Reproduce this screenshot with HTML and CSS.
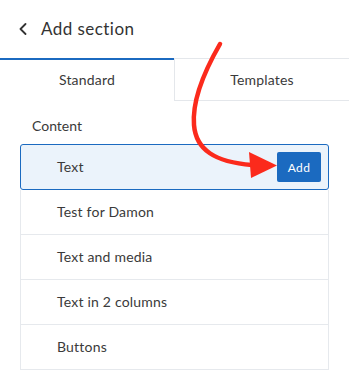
FILE: index.html
```html
<!DOCTYPE html>
<html lang="en">
<head>
    <meta charset="UTF-8">
    <meta name="viewport" content="width=device-width, initial-scale=1.0">
    <title>Add section</title>
    <link rel="stylesheet" href="styles.css">
</head>
<body>
    <div class="panel">
        <div class="panel-header">
            <svg class="back-icon" width="10" height="12" viewBox="0 0 10 12">
                <path d="M7.5 1 L2.5 6 L7.5 11" fill="none" stroke="#333" stroke-width="1.8" stroke-linecap="round" stroke-linejoin="round"/>
            </svg>
            <span class="panel-title">Add section</span>
        </div>
        <div class="tabs">
            <div class="tab tab-active">Standard</div>
            <div class="tab">Templates</div>
        </div>
        <div class="group-label">Content</div>
        <ul class="section-list">
            <li class="section-item selected">
                <span>Text</span>
                <button type="button" class="add-btn">Add</button>
            </li>
            <li class="section-item"><span>Test for Damon</span></li>
            <li class="section-item"><span>Text and media</span></li>
            <li class="section-item"><span>Text in 2 columns</span></li>
            <li class="section-item"><span>Buttons</span></li>
        </ul>
        <!-- annotation arrow drawn over the panel -->
        <svg class="arrow" width="349" height="370" viewBox="0 0 349 370">
            <path d="M220 44 C 205 70, 192 100, 194 125 C 196 150, 215 162, 252 165" fill="none" stroke="#fb2a1c" stroke-width="4.5" stroke-linecap="round"/>
            <polygon points="249,152 277,165.5 251,178" fill="#fb2a1c"/>
        </svg>
    </div>
</body>
</html>
```

FILE: styles.css
```css
body {
    margin: 0;
    background: #fff;
    font-family: 'Lato', 'Open Sans', Arial, sans-serif;
    color: #333;
}
.panel {
    position: relative;
    width: 349px;
    height: 370px;
    overflow: hidden;
}
.panel-header {
    display: flex;
    align-items: center;
    height: 58px;
    padding-left: 18px;
    padding-bottom: 2px;
    box-sizing: border-box;
}
.back-icon {
    margin-right: 13px;
    margin-top: 1px;
}
.panel-title {
    font-size: 17px;
    color: #333;
    letter-spacing: 0.45px;
}
.tabs {
    display: flex;
    height: 43px;
}
.tab {
    flex: 1;
    display: flex;
    align-items: center;
    justify-content: center;
    font-size: 14px;
    color: #3a3a3a;
    letter-spacing: 0.2px;
    box-sizing: border-box;
    border-top: 1px solid #e4e7eb;
    border-left: 1px solid #e4e7eb;
    border-bottom: 1px solid #e4e7eb;
}
.tab-active {
    flex: 0 0 174px;
    border: none;
    border-top: 2px solid #1b6ac0;
    padding-bottom: 2px;
}
.group-label {
    font-size: 14px;
    color: #3a3a3a;
    padding: 16px 0 0 32px;
    height: 27px;
}
.section-list {
    list-style: none;
    margin: 0 20px;
    padding: 0;
}
.section-item {
    display: flex;
    align-items: center;
    justify-content: space-between;
    height: 45px;
    box-sizing: border-box;
    padding: 0 7px 2px 36px;
    font-size: 14px;
    color: #3a3a3a;
    letter-spacing: 0.2px;
    border: 1px solid #e6e9ed;
    border-top: none;
}
.section-item.selected {
    height: 46px;
    padding-bottom: 0;
    background: #ebf3fb;
    border: 1px solid #1b6ac0;
    border-radius: 3px;
}
.section-item.selected span {
    margin-bottom: 2px;
}
.add-btn {
    width: 44px;
    height: 30px;
    border: none;
    border-radius: 2px;
    background: #1b6ac0;
    color: #fff;
    font-family: inherit;
    font-size: 12px;
    letter-spacing: 0.3px;
    cursor: pointer;
}
.arrow {
    position: absolute;
    left: 0;
    top: 0;
    pointer-events: none;
}
```
